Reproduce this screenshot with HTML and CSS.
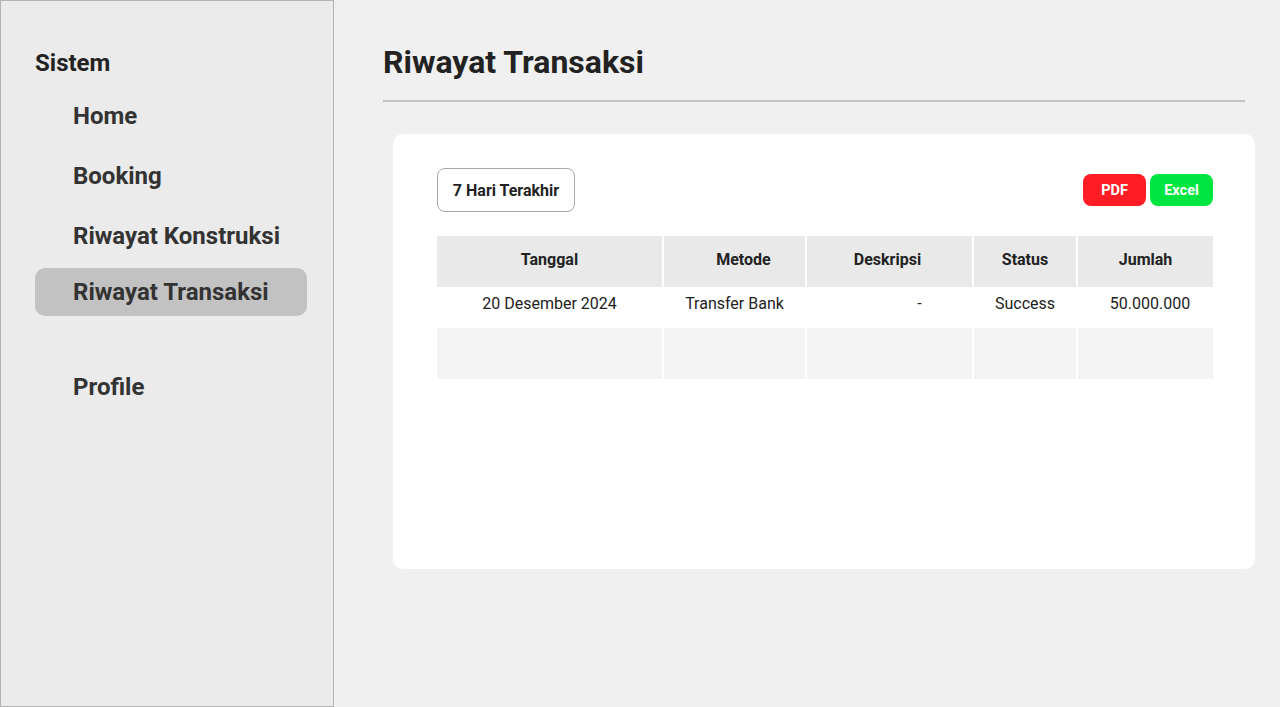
FILE: index.html
```html
<!DOCTYPE html>
<html lang="id">
<head>
<meta charset="utf-8">
<title>Riwayat Transaksi</title>
<link rel="stylesheet" href="styles.css">
</head>
<body>
<div class="app">
  <aside class="sidebar">
    <div class="brand">Sistem</div>
    <nav class="nav">
      <a class="nav-item">Home</a>
      <a class="nav-item">Booking</a>
      <a class="nav-item">Riwayat Konstruksi</a>
      <a class="nav-item active">Riwayat Transaksi</a>
    </nav>
    <nav class="nav nav-bottom">
      <a class="nav-item">Profile</a>
    </nav>
  </aside>
  <main class="main">
    <h1 class="page-title">Riwayat Transaksi</h1>
    <hr class="rule">
    <section class="card">
      <div class="toolbar">
        <button class="btn-filter">7 Hari Terakhir</button>
        <div class="exports">
          <button class="btn-export pdf">PDF</button>
          <button class="btn-export excel">Excel</button>
        </div>
      </div>
      <table class="table">
        <thead>
          <tr>
            <th class="c1">Tanggal</th>
            <th class="c2">Metode</th>
            <th class="c3">Deskripsi</th>
            <th class="c4">Status</th>
            <th class="c5">Jumlah</th>
          </tr>
        </thead>
        <tbody>
          <tr class="row-data">
            <td>20 Desember 2024</td>
            <td>Transfer Bank</td>
            <td class="desc">-</td>
            <td>Success</td>
            <td class="amount">50.000.000</td>
          </tr>
          <tr class="row-empty">
            <td></td><td></td><td></td><td></td><td></td>
          </tr>
        </tbody>
      </table>
    </section>
  </main>
</div>
</body>
</html>
```

FILE: styles.css
```css
* { box-sizing: border-box; }
html, body { margin: 0; padding: 0; }
body {
  font-family: Roboto, "Liberation Sans", Arial, sans-serif;
  background: #f0f0f0;
  color: #222;
  width: 1280px;
  height: 707px;
  overflow: hidden;
}
.app {
  display: flex;
  height: 707px;
}
.sidebar {
  width: 334px;
  flex: none;
  height: 707px;
  background: #ebebeb;
  border: 1px solid #b3b3b3;
  padding: 48px 26px 0 34px;
}
.brand {
  font-size: 24px;
  font-weight: 700;
  line-height: 28px;
  color: #222;
  margin-bottom: 15px;
}
.nav {
  display: flex;
  flex-direction: column;
  gap: 12px;
}
.nav-item {
  display: block;
  height: 48px;
  line-height: 48px;
  padding-left: 38px;
  font-size: 24px;
  font-weight: 700;
  color: #333;
  border-radius: 10px;
}
.nav-item.active {
  background: #c2c2c2;
  margin-top: -4px;
}
.nav-bottom {
  margin-top: 47px;
}
.main {
  flex: 1;
  padding: 42px 35px 0 49px;
}
.page-title {
  margin: 0;
  font-size: 32px;
  font-weight: 700;
  line-height: 40px;
  color: #222;
}
.rule {
  margin: 18px 0 0 0;
  border: 0;
  height: 2px;
  background: #c4c4c4;
}
.card {
  margin: 32px -10px 0 10px;
  height: 435px;
  background: #fff;
  border-radius: 10px;
  padding: 34px 42px 0 44px;
}
.toolbar {
  display: flex;
  align-items: center;
  justify-content: space-between;
  margin-bottom: 24px;
}
.btn-filter {
  height: 44px;
  width: 138px;
  border: 1px solid #a8a8a8;
  border-radius: 8px;
  background: #fff;
  font-family: inherit;
  font-size: 16px;
  font-weight: 700;
  color: #222;
  padding: 0;
}
.exports {
  display: flex;
  gap: 4px;
}
.btn-export {
  width: 63px;
  height: 32px;
  border: 0;
  border-radius: 8px;
  font-family: inherit;
  font-size: 14.5px;
  font-weight: 700;
  color: #fff;
  padding: 0;
}
.btn-export.pdf { background: #ff1d25; }
.btn-export.excel { background: #00e640; }
.table {
  width: 776px;
  border-collapse: collapse;
  table-layout: fixed;
}
.table th, .table td {
  border-right: 2px solid #fff;
  text-align: center;
  padding: 0;
  font-size: 16px;
}
.table th:last-child, .table td:last-child { border-right: 0; }
.table th {
  height: 51px;
  background: #e9e9e9;
  font-weight: 700;
  color: #222;
  padding-bottom: 5px;
}
.c1 { width: 226px; }
.c2 { width: 143px; }
.c3 { width: 167px; }
.c4 { width: 104px; }
.c5 { width: 136px; }
.table th.c2 { padding-left: 18px; }
.table th.c3 { padding-right: 4px; }
.row-data td {
  height: 41px;
  color: #222;
  padding-bottom: 9px;
}
.row-data .desc { padding-left: 60px; }
.row-data .amount { padding-left: 9px; }
.row-empty td {
  height: 51px;
  background: #f4f4f4;
}
```
